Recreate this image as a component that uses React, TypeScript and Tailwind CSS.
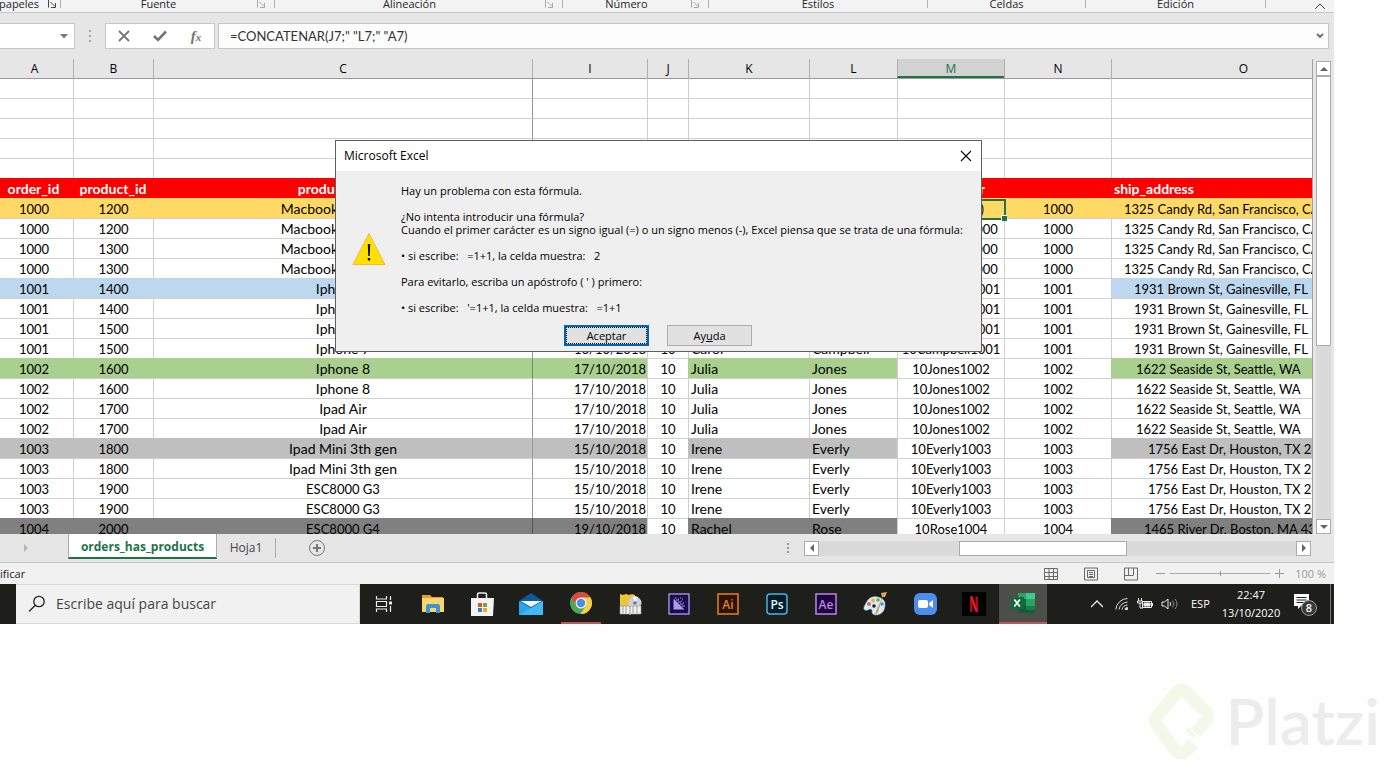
import type { ReactNode } from "react";

type Fill = "yellow" | "blue" | "green" | "silver" | "gray" | "none";

interface Order {
  order: string;
  product: string;
  name: string;
  date?: string;
  qty?: string;
  first?: string;
  last?: string;
  key: ReactNode;
  ref: string;
  address: string;
  pad: string;
  fill: Fill;
}

const FORMULA = '=CONCATENAR(J7;" "L7;" "A7)';

const fillClass: Record<Fill, string> = {
  yellow: "bg-[#ffd966] border-[#ffd966]",
  blue: "bg-[#bdd7ee] border-[#bdd7ee]",
  green: "bg-[#a9d08e] border-[#a9d08e]",
  silver: "bg-[#bfbfbf] border-[#bfbfbf]",
  gray: "bg-[#808080] border-[#808080]",
  none: "bg-white border-[#d0d0d0]",
};

const candy = { order: "1000", ref: "1000", name: "Macbook Pro Retina", address: "1325 Candy Rd, San Francisco, CA", pad: "pl-3", key: "10Williams1000" };
const brown = { order: "1001", ref: "1001", name: "Iphone 7", address: "1931 Brown St, Gainesville, FL", pad: "pl-[22px]", key: "10Campbell1001" };
const seaside = { order: "1002", ref: "1002", date: "17/10/2018", qty: "10", first: "Julia", last: "Jones", address: "1622 Seaside St, Seattle, WA", pad: "pl-6", key: "10Jones1002" };
const east = { order: "1003", ref: "1003", date: "15/10/2018", qty: "10", first: "Irene", last: "Everly", address: "1756 East Dr, Houston, TX 28", pad: "pl-9", key: "10Everly1003" };

const orders: Order[] = [
  { ...candy, product: "1200", fill: "yellow", key: FORMULA },
  { ...candy, product: "1200", fill: "none" },
  { ...candy, product: "1300", fill: "none" },
  { ...candy, product: "1300", fill: "none" },
  { ...brown, product: "1400", fill: "blue" },
  { ...brown, product: "1400", fill: "none" },
  { ...brown, product: "1500", fill: "none" },
  { ...brown, product: "1500", date: "16/10/2018", qty: "10", first: "Carol", last: "Campbell", fill: "none" },
  { ...seaside, product: "1600", name: "Iphone 8", fill: "green" },
  { ...seaside, product: "1600", name: "Iphone 8", fill: "none" },
  { ...seaside, product: "1700", name: "Ipad Air", fill: "none" },
  { ...seaside, product: "1700", name: "Ipad Air", fill: "none" },
  { ...east, product: "1800", name: "Ipad Mini 3th gen", fill: "silver" },
  { ...east, product: "1800", name: "Ipad Mini 3th gen", fill: "none" },
  { ...east, product: "1900", name: "ESC8000 G3", fill: "none" },
  { ...east, product: "1900", name: "ESC8000 G3", fill: "none" },
  { order: "1004", product: "2000", name: "ESC8000 G4", date: "19/10/2018", qty: "10", first: "Rachel", last: "Rose", key: "10Rose1004", ref: "1004", address: "1465 River Dr, Boston, MA 43", pad: "pl-8", fill: "gray" },
];

function Launcher({ dim }: { dim?: boolean }) {
  return (
    <svg viewBox="0 0 10 10" className={dim ? "h-[10px] w-[10px] text-[#a8a8a8]" : "h-[10px] w-[10px] text-[#444]"} fill="none" stroke="currentColor">
      <path d="M1.500 8.500V.5h7M3.500 3l4.500 4.500M8.500 4v4.500H4" />
    </svg>
  );
}

function RibbonGroup({ label, width, launcher }: { label: string; width: string; launcher?: boolean }) {
  return (
    <div className={`flex h-2 flex-none items-center border-r border-[#b0b0b0] ${width}`}>
      <span className="flex-1 text-center">{label}</span>
      {launcher && (
        <button aria-label={label} className="mr-1 w-[14px]">
          <Launcher dim />
        </button>
      )}
    </div>
  );
}

function Ribbon() {
  return (
    <div className="flex h-[13px] overflow-hidden border-b border-[#c6c6c6] bg-[#f3f3f3] text-[11px] leading-3 text-[#262626]">
      <div className="flex h-2 w-[61px] flex-none items-center justify-end border-r border-[#b0b0b0]">
        <span className="mr-2">papeles</span>
        <button aria-label="Portapapeles" className="mr-[3px] w-[10px]"><Launcher /></button>
      </div>
      <RibbonGroup label="Fuente" width="w-[214px]" launcher />
      <RibbonGroup label="Alineación" width="w-[288px]" launcher />
      <RibbonGroup label="Número" width="w-[146px]" launcher />
      <RibbonGroup label="Estilos" width="w-[219px]" />
      <RibbonGroup label="Celdas" width="w-[158px]" />
      <RibbonGroup label="Edición" width="w-[180px]" />
      <button aria-label="Contraer la cinta" className="ml-auto mr-2 h-3">
        <svg viewBox="0 0 12 8" className="h-2 w-3" fill="none" stroke="#444"><path d="M1 7l5-5 5 5" /></svg>
      </button>
    </div>
  );
}

function FormulaBar() {
  return (
    <div className="flex items-center bg-[#e6e6e6] pb-[10px] pr-[5px] pt-[10px]">
      <div className="flex h-[26px] w-[75px] items-center border border-l-0 border-[#c6c6c6] bg-white">
        <input aria-label="Cuadro de nombres" className="w-14 outline-none" />
        <button aria-label="Nombres" className="ml-1"><svg viewBox="0 0 8 5" className="h-[5px] w-2"><path d="M0 0h8L4 4.500z" fill="#777" /></svg></button>
      </div>
      <svg viewBox="0 0 2 12" className="ml-[14px] h-3 w-[2px] flex-none" fill="#a8a8a8"><path d="M0 0h2v2H0zM0 5h2v2H0zM0 10h2v2H0z" /></svg>
      <div className="ml-[14px] flex h-[26px] w-[110px] flex-none items-center border border-[#c6c6c6] bg-white text-[#757575]">
        <button aria-label="Cancelar" className="flex w-9 justify-center"><svg viewBox="0 0 12 12" className="h-3 w-3" fill="none" stroke="currentColor" strokeWidth="1.800"><path d="M1 1l10 10M11 1L1 11" /></svg></button>
        <button aria-label="Introducir" className="flex w-9 justify-center"><svg viewBox="0 0 14 12" className="h-3 w-[14px]" fill="none" stroke="currentColor" strokeWidth="2.600"><path d="M1 6l4 4 8-8.500" /></svg></button>
        <button aria-label="Insertar función" className="w-9 text-center font-['Liberation_Serif',serif] text-[15px] font-bold italic leading-4">f<span className="text-[11px]">x</span></button>
      </div>
      <div className="ml-[3px] flex h-[26px] min-w-0 flex-1 items-center border border-[#c6c6c6] bg-[#fdfdfd] pl-[11px] pr-1">
        <input aria-label="Barra de fórmulas" defaultValue={FORMULA} className="min-w-0 flex-1 bg-transparent font-['Lato',sans-serif] text-[13px] leading-5 text-[#333] outline-none" />
        <button aria-label="Expandir"><svg viewBox="0 0 8 6" className="h-[6px] w-2" fill="none" stroke="#666" strokeWidth="1.800"><path d="M1 1l3 3 3-3" /></svg></button>
      </div>
    </div>
  );
}

const letters = ["A", "B", "C", "I", "J", "K", "L", "M", "N", "O"];

function Grid() {
  return (
    <div className="h-[475px] min-w-0 flex-1 overflow-hidden border-r border-[#a0a0a0] bg-white">
      <table className="w-[1375px] table-fixed border-separate border-spacing-0 whitespace-nowrap font-['Lato',sans-serif] text-[13px] leading-4 text-black">
        <colgroup>
          <col className="w-[73px]" /><col className="w-[80px]" /><col className="w-[379px]" /><col className="w-[115px]" /><col className="w-[41px]" />
          <col className="w-[121px]" /><col className="w-[88px]" /><col className="w-[107px]" /><col className="w-[107px]" /><col />
        </colgroup>
        <thead>
          <tr className="font-['Open_Sans',sans-serif] text-[12px]">
            {letters.map((l) => (
              <th
                key={l}
                className={
                  l === "M"
                    ? "h-[19px] border-b-2 border-l border-b-[#217346] border-l-[#b0b0b0] bg-[#d2d2d2] p-0 pt-[2px] font-normal leading-[15px] text-[#217346]"
                    : l === "A"
                      ? "h-[19px] bg-[#e6e6e6] p-0 pr-1 font-normal leading-4"
                      : "h-[19px] border-l border-[#b0b0b0] bg-[#e6e6e6] p-0 font-normal leading-4"
                }
              >
                {l}
              </th>
            ))}
          </tr>
        </thead>
        <tbody>
          {[0, 1, 2, 3, 4].map((r) => (
            <tr key={r}>
              {letters.map((l) => (
                <td
                  key={l}
                  className={`h-5 border-t p-0 ${r === 0 ? "border-t-[#999]" : "border-t-[#d0d0d0]"} ${l === "A" ? "" : "border-l"} ${l === "I" ? "border-l-[#999]" : "border-l-[#d0d0d0]"}`}
                />
              ))}
            </tr>
          ))}
          <tr className="bg-[#ff0000] text-[14px] font-bold text-white">
            <td className="h-5 p-0 pr-[6px] pt-px text-center">order_id</td>
            <td className="p-0 pt-px text-center">product_id</td>
            <td className="p-0 pt-px text-center">product_name</td>
            <td /><td /><td /><td />
            <td className="p-0 pt-px text-center">concatenar</td>
            <td />
            <td className="p-0 pl-[3px] pt-px text-left">ship_address</td>
          </tr>
          {orders.map((o, i) => {
            const f = fillClass[o.fill];
            const plain = o.fill === "yellow" ? f : fillClass.none;
            const frozen = o.fill === "none" || o.fill === "silver" ? "border-l-[#999]" : "border-l-[#00000055]";
            return (
              <tr key={i}>
                <td className={`h-5 border-t p-0 pr-[5px] text-center ${f}`}>{o.order}</td>
                <td className={`border-l border-t p-0 text-center ${f}`}>{o.product}</td>
                <td className={`border-l border-t p-0 text-center ${o.name.startsWith("ESC") ? "" : "text-[14px] leading-4"} ${f}`}>{o.name}</td>
                <td className={`border-l border-t p-0 pr-px text-right ${f} ${frozen}`}>{o.date}</td>
                <td className={`border-l border-t p-0 text-center ${plain}`}>{o.qty}</td>
                <td className={`border-l border-t p-0 pl-[2px] text-[14px] leading-4 ${f}`}>{o.first}</td>
                <td className={`border-l border-t p-0 pl-[2px] text-[14px] leading-4 ${f}`}>{o.last}</td>
                <td className={`border-l border-t p-0 text-center ${plain}`}>
                  {i === 0 ? (
                    <div className="relative pl-1 pr-5">
                      <div className="flex justify-end overflow-hidden">{o.key}</div>
                      <span className="absolute -bottom-[3px] -left-px -right-[2px] -top-[2px] border-2 border-[#217346]" />
                      <span className="absolute -bottom-1 -right-[3px] h-[6px] w-[6px] border-l border-t border-white bg-[#217346]" />
                    </div>
                  ) : (
                    o.key
                  )}
                </td>
                <td className={`border-l border-t p-0 text-center ${plain}`}>{o.ref}</td>
                <td className={`border-l border-t p-0 ${f} ${o.pad}`}>{o.address}</td>
              </tr>
            );
          })}
        </tbody>
      </table>
    </div>
  );
}

function ScrollButton({ label, d }: { label: string; d: string }) {
  return (
    <button aria-label={label} className="flex h-[15px] w-[15px] flex-none items-center justify-center border border-[#ababab] bg-white">
      <svg viewBox="0 0 8 8" className="h-2 w-2" fill="#666"><path d={d} /></svg>
    </button>
  );
}

function Dialog() {
  return (
    <div role="dialog" aria-labelledby="dialog-title" className="absolute left-[335px] top-[140px] w-[647px] border border-[#5f5f5f] bg-[#efefef] text-black">
      <div className="flex h-[30px] items-center justify-between bg-white pl-2 pr-[9px]">
        <h1 id="dialog-title" className="text-[12px] leading-4">Microsoft Excel</h1>
        <button aria-label="Cerrar"><svg viewBox="0 0 12 12" className="h-3 w-3" fill="none" stroke="#111" strokeWidth="1.200"><path d="M1 1l10 10M11 1L1 11" /></svg></button>
      </div>
      <div className="flex items-center pt-[13px]">
        <svg viewBox="0 0 34 34" className="ml-4 h-[34px] w-[34px] flex-none">
          <path d="M17 1.500L33 32.500H1z" fill="#ffe100" stroke="#f5b83d" strokeLinejoin="round" />
          <path d="M15.800 12h2.400l-.4 12h-1.600zM15.800 26h2.400v2.400h-2.400z" fill="#111" />
        </svg>
        <div className="ml-[15px] flex flex-col gap-[13px] whitespace-pre text-[11px] leading-[13px]">
          <p>Hay un problema con esta fórmula.</p>
          <p>{"¿No intenta introducir una fórmula?\nCuando el primer carácter es un signo igual (=) o un signo menos (-), Excel piensa que se trata de una fórmula:"}</p>
          <p>{"• si escribe:   =1+1, la celda muestra:   2"}</p>
          <p>{"Para evitarlo, escriba un apóstrofo ( ' ) primero:"}</p>
          <p>{"• si escribe:   '=1+1, la celda muestra:   =1+1"}</p>
        </div>
      </div>
      <div className="flex justify-center gap-[18px] pb-[5px] pr-px pt-[11px] text-[11px]">
        <button className="h-[21px] w-[85px] border-2 border-[#0067b8] bg-[#e1e1e1] leading-4 outline-1 -outline-offset-3 outline-dotted outline-black">Aceptar</button>
        <button className="h-[21px] w-[85px] border border-[#adadad] bg-[#e1e1e1] leading-4">Ay<span className="underline">u</span>da</button>
      </div>
    </div>
  );
}

function SheetTabs() {
  return (
    <div className="flex h-[29px] border-b border-[#c6c6c6] bg-[#e6e6e6] pr-[23px] font-['Open_Sans',sans-serif]">
      <div className="flex w-[68px] flex-none items-center pl-6">
        <svg viewBox="0 0 4 8" className="h-2 w-1" fill="#b5b5b5"><path d="M0 0l4 4-4 4z" /></svg>
      </div>
      <button className="h-[25px] w-[149px] flex-none border-x border-b-2 border-x-[#ababab] border-b-[#217346] bg-white pt-[3px] text-[12px] font-bold leading-5 text-[#217346]">orders_has_products</button>
      <button className="my-1 h-5 w-[59px] flex-none border-r border-[#ababab] text-[12px] leading-5 text-[#444]">Hoja1</button>
      <button aria-label="Hoja nueva" className="ml-8 flex items-center">
        <svg viewBox="0 0 18 18" className="h-[18px] w-[18px]" fill="none" stroke="#777"><circle cx="9" cy="9" r="7.500" /><path d="M9 5v8M5 9h8" strokeWidth="2" /></svg>
      </button>
      <div className="ml-auto flex items-center gap-[15px]">
        <svg viewBox="0 0 2 10" className="h-[10px] w-[2px]" fill="#999"><path d="M0 0h2v2H0zM0 4h2v2H0zM0 8h2v2H0z" /></svg>
        <div className="flex w-[507px]">
          <ScrollButton label="Izquierda" d="M6 0v8L2 4z" />
          <div className="flex-1 bg-[#dadada] pl-[140px]"><div className="h-[15px] w-[168px] border border-[#ababab] bg-white" /></div>
          <ScrollButton label="Derecha" d="M2 0v8l4-4z" />
        </div>
      </div>
    </div>
  );
}

function StatusBar() {
  return (
    <div className="flex h-[21px] items-center bg-[#f1f1f1] pr-2 text-[11px] leading-4 text-[#222]">
      <span className="flex-1">ificar</span>
      <div className="mr-[18px] flex gap-[26px] text-[#6a6a6a]">
        <button aria-label="Normal"><svg viewBox="0 0 14 14" className="h-[14px] w-[14px]" fill="none" stroke="currentColor"><path d="M.5 1.500h13v11H.5zM.5 5.500h13M.5 9.500h13M5 1.500v11M9.500 1.500v11" /></svg></button>
        <button aria-label="Diseño de página"><svg viewBox="0 0 14 14" className="h-[14px] w-[14px]" fill="none" stroke="currentColor"><path d="M.5 1h13v12H.5zM3.500 3.500h7v7h-7zM5 5.500h4M5 7.500h4M5 9.500h4" /></svg></button>
        <button aria-label="Salto de página"><svg viewBox="0 0 14 14" className="h-[14px] w-[14px]" fill="none" stroke="currentColor"><path d="M.5 1h13v12H.5zM4.500 1v7M9.500 1v7M.5 8.500h9" /></svg></button>
      </div>
      <div className="flex items-center gap-[5px] text-[#9a9a9a]">
        <button aria-label="Alejar"><svg viewBox="0 0 9 9" className="h-[9px] w-[9px]" stroke="currentColor"><path d="M0 4.500h9" /></svg></button>
        <input type="range" aria-label="Zoom" className="h-[5px] w-[100px] appearance-none bg-[linear-gradient(#aaa,#aaa)] bg-[length:100%_1px] bg-center bg-no-repeat [&::-webkit-slider-thumb]:h-[5px] [&::-webkit-slider-thumb]:w-px [&::-webkit-slider-thumb]:appearance-none [&::-webkit-slider-thumb]:bg-[#999]" />
        <button aria-label="Acercar"><svg viewBox="0 0 9 9" className="h-[9px] w-[9px]" stroke="currentColor"><path d="M0 4.500h9M4.500 0v9" /></svg></button>
        <span className="ml-[6px]">100 %</span>
      </div>
    </div>
  );
}

function Adobe({ text, fg, bg, round }: { text: string; fg: string; bg: string; round?: boolean }) {
  return (
    <svg viewBox="0 0 22 22" className="h-[22px] w-[22px]">
      <rect x="1" y="1" width="20" height="20" rx={round ? 3 : 0} fill={bg} stroke={fg} strokeWidth="1.500" />
      <text x="11" y="15.500" textAnchor="middle" fontFamily="Open Sans, sans-serif" fontSize="12" fontWeight="600" fill={round ? "#e8f6ff" : fg}>{text}</text>
    </svg>
  );
}

const apps: { name: string; icon: ReactNode; state?: "open" | "active" }[] = [
  { name: "Vista de tareas", icon: <svg viewBox="0 0 18 18" className="h-[18px] w-[18px]" fill="none" stroke="#eee" strokeWidth="1.200"><path d="M1.500 1v3h10V1M1.500 6.500h10v5h-10zM1.500 17v-3h10v3M15.500 1v4M15.500 11v6" /><path d="M14 6.500h3v3h-3z" fill="#eee" stroke="none" /></svg> },
  { name: "Explorador", icon: <svg viewBox="0 0 24 22" className="h-[22px] w-6"><path d="M1 2h8l2 2h11v6H1z" fill="#e0a030" /><path d="M1 5h22v14H1z" fill="#f9d56e" /><path d="M5 20v-7q0-2 2-2h10q2 0 2 2v7h-4v-5H9v5z" fill="#3f94cf" /></svg> },
  { name: "Microsoft Store", icon: <svg viewBox="0 0 24 26" className="h-[26px] w-6"><path d="M7.500 7V3.500q0-1.500 1.500-1.500h6q1.500 0 1.500 1.500V7" fill="none" stroke="#eee" strokeWidth="1.500" /><path d="M1 7h23l-1 18H1z" fill="#f3f3f3" /><path d="M8 12h4v4H8z" fill="#e0512c" /><path d="M13 12h4v4h-4z" fill="#7aa72b" /><path d="M8 17h4v4H8z" fill="#3080c8" /><path d="M13 17h4v4h-4z" fill="#e5b322" /></svg> },
  { name: "Correo", icon: <svg viewBox="0 0 26 24" className="h-6 w-[26px]"><path d="M1 9L13 1l12 8-12 9z" fill="#0a58a0" /><path d="M2.500 9h21L13 15z" fill="#f2f8fc" /><path d="M1 9l12 7 12-7v14H1z" fill="#29a5e8" /><path d="M1 23l12-7L25 9v14z" fill="#3fbaf4" /></svg> },
  { name: "Chrome", state: "open", icon: <svg viewBox="0 0 24 24" className="h-6 w-6"><circle cx="12" cy="12" r="11" fill="#4aa85a" /><path d="M2.500 6.500A11 11 0 0 1 21.500 6.500H12L7.200 14.800z" fill="#dc4a3d" /><path d="M21.500 6.500A11 11 0 0 1 11.500 23L16.800 14.700 12 6.500z" fill="#fbcf45" /><circle cx="12" cy="12" r="5.500" fill="#f2f2f2" /><circle cx="12" cy="12" r="4.200" fill="#4c8be8" /></svg> },
  { name: "Compresor", icon: <svg viewBox="0 0 24 24" className="h-6 w-6"><path d="M2 2l3 1 3-1 3 1 3-1 3 1v11H2z" fill="#edc53b" /><circle cx="17" cy="11" r="6.500" fill="#cfd0dd" /><path d="M17 11l-2-6.500a7 7 0 0 1 5 .5z" fill="#f5f5ff" /><circle cx="17" cy="11" r="1.800" fill="#777" /><path d="M2 14h9l1 1 1-1h10v8H13l-1 1-1-1H2z" fill="#f0f0f0" stroke="#999" strokeWidth=".6" /><path d="M5 14v7M8 14v7M12 15v7M15 14v7M19 14v7" stroke="#888" strokeWidth=".8" /></svg> },
  { name: "Media Encoder", icon: <svg viewBox="0 0 22 22" className="h-[22px] w-[22px]"><path d="M1 1h20v20H1z" fill="#1a0a4a" stroke="#9a8ae0" strokeWidth="1.500" /><path d="M5.500 5.500v11h11z" fill="#a79cf0" /><path d="M6.500 5h2M8 7h3M10 9h3M12 11h3M10 6h1M13 8h1M15 10h1M14 6h1M12 5h1M14 13h3" stroke="#a79cf0" /></svg> },
  { name: "Illustrator", icon: <Adobe text="Ai" fg="#e08326" bg="#2d1200" /> },
  { name: "Photoshop", icon: <Adobe text="Ps" fg="#4ab4d8" bg="#001d2e" round /> },
  { name: "After Effects", icon: <Adobe text="Ae" fg="#b58ae0" bg="#1f0040" /> },
  { name: "Paint", icon: <svg viewBox="0 0 26 26" className="h-[26px] w-[26px]"><path d="M4 12Q8 4 16 6q8 2 7 9-1 8-8 9-5 0-5-3 1-3-2-3-1 0-2 1-5 1-4-3z" fill="#d9ecf6" stroke="#9bbccc" strokeWidth=".5" /><circle cx="7" cy="13" r="2" fill="#e06a4a" /><circle cx="11" cy="9.500" r="2" fill="#f2b33a" /><circle cx="16" cy="9" r="1.800" fill="#5db35d" /><circle cx="12" cy="15" r="1.800" fill="#224" /><circle cx="20" cy="13" r="1.800" fill="#4a90d8" /><path d="M21 5l-5 16-3 4 1-5z" fill="#d29a58" /><path d="M20 6l-1-4 6-1-2 5z" fill="#e0a866" /></svg> },
  { name: "Zoom", icon: <svg viewBox="0 0 24 24" className="h-6 w-6"><rect x="1" y="1" width="23" height="22" rx="6" fill="#4a8cf0" /><rect x="5" y="8" width="10" height="8" rx="2" fill="#fff" /><path d="M16 11l4-3v8l-4-3z" fill="#fff" /></svg> },
  { name: "Netflix", icon: <svg viewBox="0 0 24 24" className="h-6 w-6"><path d="M0 0h24v24H0z" fill="#000" /><path d="M8 4.500h2.600v15L8 20zM13.400 4.500H16V20l-2.600-.5z" fill="#a80d14" /><path d="M8 4.500h2.700L16 20l-2.700-.5z" fill="#e01b24" /></svg> },
  { name: "Excel", state: "active", icon: <svg viewBox="0 0 26 24" className="h-6 w-[26px]"><path d="M8 2h8v7H8z" fill="#2aa368" /><path d="M16 2h9v6h-9z" fill="#3fc98a" /><path d="M8 8h8v7H8z" fill="#176b40" /><path d="M16 8h9v7h-9z" fill="#27a364" /><path d="M8 15h17v7H8z" fill="#175c38" /><path d="M16 15h9v4h-9z" fill="#1a7d49" /><path d="M1 6h13v12H1z" fill="#126a3c" /><path d="M4.300 8.500l5.600 7M9.900 8.500l-5.600 7" stroke="#fff" strokeWidth="1.800" /></svg> },
];

function Taskbar() {
  return (
    <div className="flex h-10 bg-[#1e1f1a] text-white">
      <label className="ml-4 flex w-[344px] flex-none items-center border border-l-0 border-[#d8d8d8] bg-[#f1f1f1] pl-3">
        <svg viewBox="0 0 18 18" className="h-[18px] w-[18px]" fill="none" stroke="#222" strokeWidth="1.300"><circle cx="11" cy="6.500" r="5.200" /><path d="M7.300 10.300L1 16.500" /></svg>
        <input aria-label="Buscar" placeholder="Escribe aquí para buscar" className="ml-[10px] w-64 bg-transparent text-[14px] leading-5 outline-none placeholder:text-[#444]" />
      </label>
      <nav className="flex w-[687px] flex-none justify-between">
        {apps.map((a) => (
          <button
            key={a.name}
            aria-label={a.name}
            className={
              a.state === "active"
                ? "flex w-12 items-center justify-center border-b-2 border-[#b55a5a] bg-[#4d4e4a]"
                : "flex w-12 items-center justify-center"
            }
          >
            {a.state === "open" ? <span className="flex h-10 w-10 items-center justify-center border-b-2 border-[#b55a5a]">{a.icon}</span> : a.icon}
          </button>
        ))}
      </nav>
      <div className="ml-auto flex items-center text-[11px] leading-[18px]">
        <svg viewBox="0 0 12 8" className="mr-3 h-2 w-3" fill="none" stroke="#eee" strokeWidth="1.300"><path d="M0 7l6-6 6 6" /></svg>
        <svg viewBox="0 0 14 14" className="mr-2 h-[14px] w-[14px]" fill="none" stroke="#ddd"><path d="M.8 12.500A12 12 0 0 1 12.500 1.500M4 12.500a9 9 0 0 1 8.500-7.500M7 12.500a6 6 0 0 1 5.500-4.500" /><path d="M10 12.500q0-2 2.500-2v2z" fill="#ddd" /></svg>
        <svg viewBox="0 0 16 12" className="mr-2 h-3 w-4" fill="none" stroke="#eee"><path d="M5.500 3.500h9v6h-9zM15.500 5v3M1.500 0v3M4.500 0v3M.5 3h5v2H.5zM3 5v5h3" /><path d="M7 5h6v3H7z" fill="#eee" /></svg>
        <svg viewBox="0 0 18 14" className="mr-3 h-[14px] w-[18px]" fill="none" stroke="#eee"><path d="M1 5h2.500L7 2v10L3.500 9H1z" /><path d="M9 5q1.500 2 0 4" /><path d="M11.500 3.500q3 3.500 0 7M14 2q4 5 0 10" stroke="#888" /></svg>
        <span className="w-[30px]">ESP</span>
        <div className="w-[60px] text-center"><div>22:47</div><div>13/10/2020</div></div>
        <svg viewBox="0 0 26 26" className="ml-3 mr-[11px] h-[26px] w-[26px]"><path d="M1 3h15v12H8l-3 3v-3H1z" fill="#fff" /><path d="M3.500 6.500h10M3.500 9h10M3.500 11.500h7" stroke="#222" /><circle cx="16" cy="17" r="7.500" fill="#3a3b38" stroke="#999" /><text x="16" y="21" textAnchor="middle" fontFamily="Open Sans, sans-serif" fontSize="11" fontWeight="600" fill="#fff">8</text></svg>
        <span className="mr-[3px] h-10 w-px bg-[#777]" />
      </div>
    </div>
  );
}

export default function App() {
  return (
    <div className="min-h-screen overflow-x-hidden bg-[#fefefe] font-['Open_Sans',sans-serif]">
      <div className="relative mr-[58px]">
        <Ribbon />
        <FormulaBar />
        <div className="flex bg-[#e6e6e6] pr-[3px]">
          <Grid />
          <div className="ml-[3px] flex flex-col pt-[2px]">
            <ScrollButton label="Arriba" d="M0 6h8L4 2z" />
            <div className="flex-1 bg-[#dadada]"><div className="h-[270px] w-[15px] border border-[#ababab] bg-white" /></div>
            <ScrollButton label="Abajo" d="M0 2h8L4 6z" />
          </div>
        </div>
        <SheetTabs />
        <StatusBar />
        <Taskbar />
        <Dialog />
      </div>
      <div className="flex items-center justify-end gap-[11px] pr-3 pt-[58px]">
        <svg viewBox="0 0 66 78" className="h-[78px] w-[66px]" fill="none" stroke="#f3f8e8" strokeWidth="12.500" strokeLinejoin="round">
          <path d="M45.500 61.500L38 69Q33 73.500 28 69L9 44Q5.500 39 9 34L28 11Q33 5 38.500 10.500L57.500 29Q62 34 57.500 39.500L47.500 51" />
          <path d="M39 47l8 8" strokeWidth="4" />
        </svg>
        <span className="font-['Lato',sans-serif] text-[64px] font-semibold leading-[76px] text-[#ececec]">Platzi</span>
      </div>
    </div>
  );
}
